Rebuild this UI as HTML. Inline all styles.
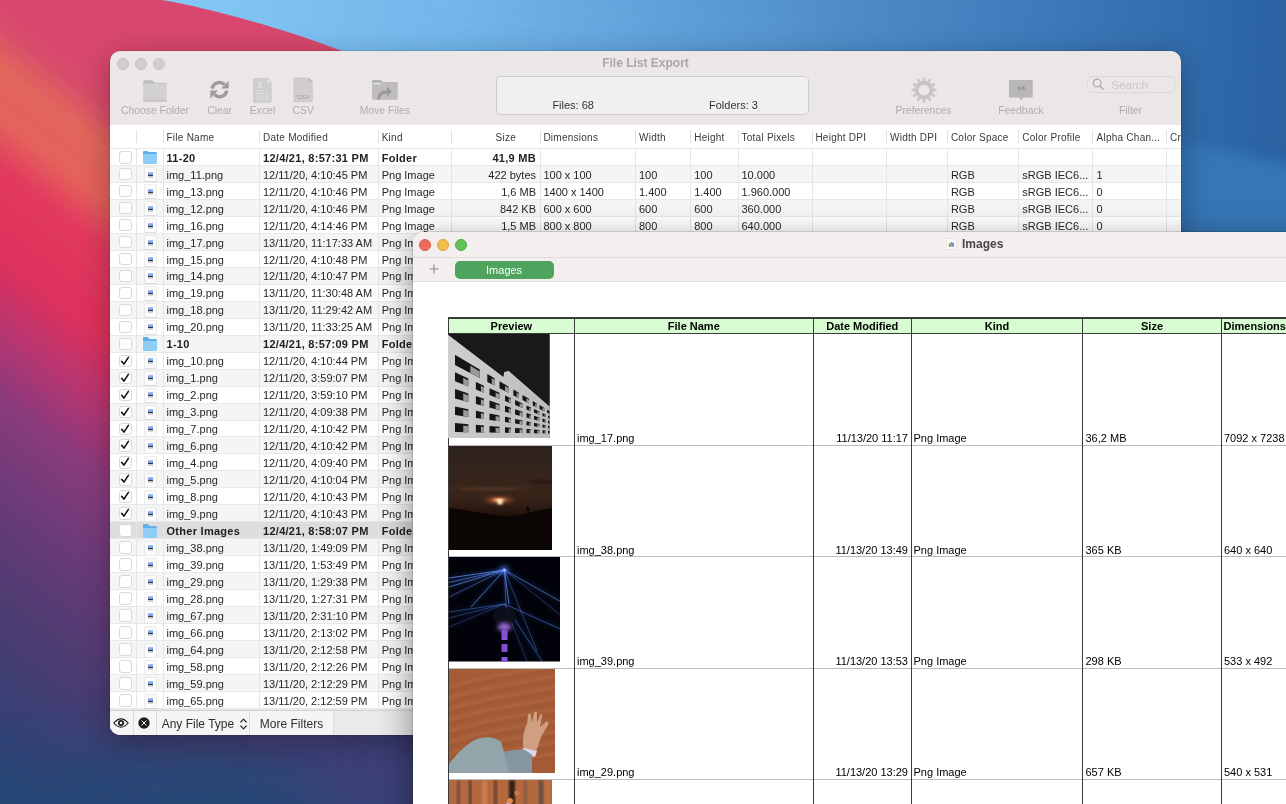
<!DOCTYPE html>
<html><head><meta charset="utf-8">
<style>
*{box-sizing:border-box;margin:0;padding:0}
html,body{width:1286px;height:804px;overflow:hidden;font-family:"Liberation Sans",sans-serif}
#main,#imgw{will-change:transform}
body{position:relative;background:#2f5d9a}
#wall{position:absolute;left:0;top:0;width:1286px;height:804px}
/* main window */
#main{position:absolute;left:110px;top:51px;width:1071px;height:684px;border-radius:10px;overflow:hidden;background:#ebe7e7;box-shadow:0 0 0 0.5px rgba(0,0,0,.2),0 8px 30px rgba(0,0,0,.3)}
#main .tl{position:absolute;top:6.5px;width:12px;height:12px;border-radius:50%;background:#d2cece;border:0.5px solid #c6c2c2}
#title{position:absolute;left:0;width:1071px;top:4.8px;text-align:center;font-weight:bold;font-size:12px;color:#aba7a7;line-height:normal}
.lbl{position:absolute;top:53.6px;font-size:10.4px;color:#b0acac;white-space:nowrap;transform:translateX(-50%);line-height:normal}
#status{position:absolute;left:386px;top:25px;width:313px;height:39px;border:1px solid #cfcccc;border-radius:4px;background:#f1f0f0}
#status span{position:absolute;top:21.9px;font-size:11px;color:#333;line-height:normal}
#thead{position:absolute;left:0;top:74px;width:1071px;height:23px;background:#fff}
.th{position:absolute;top:6.8px;letter-spacing:0.25px;font-size:10px;color:#3a3a3a;white-space:nowrap;line-height:normal}
.thd{position:absolute;top:5.4px;width:1px;height:13px;background:#e2e2e2}
#rows{position:absolute;left:0;top:97px;width:1071px}
.r{position:relative;height:16.97px;background:#fff;box-shadow:inset 0 1px 0 #e9e9e9;font-size:11px;color:#262626;white-space:nowrap}
.r.g{background:#f4f5f5}
.r.sel{background:#dddddd}
.r span{position:absolute;top:3.7px;line-height:normal}
.r.b{font-weight:bold;color:#1e1e1e;letter-spacing:0.28px}
.vl{position:absolute;top:97px;width:1px;height:560px;background:#e6e6e6}
.cb{position:absolute;left:9.2px;top:3px;width:12.5px;height:12.5px;border:1px solid #d9d9d9;border-radius:3px;background:#fff}
.ck{position:absolute;left:-1px;top:-1px}
.fo{position:absolute;left:33px;top:4.2px;width:14px;height:12px;border-radius:1.5px;background:#8dcdf6;border-top:2px solid #5eb0ea}
.fo:before{content:"";position:absolute;left:0;top:-3.5px;width:6px;height:3px;background:#5eb0ea;border-radius:1px 2px 0 0}
.fi{position:absolute;left:35px;top:3.5px;width:10.5px;height:13px;background:#fbfbfb;box-shadow:0 0 0 0.5px #dedede, 0 1px 1px rgba(0,0,0,.12)}
.fi:before{content:"";position:absolute;left:2.6px;top:3.2px;width:5.4px;height:3px;background:linear-gradient(#a9c4f4,#6f92e0)}
.fi:after{content:"";position:absolute;left:2.6px;top:6.2px;width:5.4px;height:3px;background:linear-gradient(#2a3450 0,#2a3450 40%,#c4c8ce 40%,#d8dadc 100%)}
#foot{position:absolute;left:0;top:659px;width:1071px;height:25px;background:#ece9e9;border-top:1px solid #d3d1d1}
#footw{position:absolute;left:0;top:0;width:223.4px;height:25px;background:#f6f5f5}
.fd{position:absolute;top:0;width:1px;height:25px;background:#dcdada}
#foot span{position:absolute;top:5.6px;font-size:12px;color:#2e2e2e;line-height:normal;white-space:nowrap}
/* images window */
#imgw{position:absolute;left:413px;top:232px;width:900px;height:600px;background:#fff;border-radius:9px 0 0 0;box-shadow:0 0 0 0.5px rgba(0,0,0,.25),0 10px 35px rgba(0,0,0,.45)}
#itb{position:absolute;left:0;top:0;width:900px;height:25.5px;background:#f4efef;border-bottom:1px solid #dfdbdb;border-radius:9px 0 0 0}
#itab{position:absolute;left:0;top:25.5px;width:900px;height:24.5px;background:#f4efef;border-bottom:1px solid #e3dfdf}
.itl{position:absolute;top:6.7px;width:12px;height:12px;border-radius:50%}
#ititle{position:absolute;left:549px;top:5.2px;font-size:12px;font-weight:bold;color:#4a4646;line-height:normal}
#grid{position:absolute;left:0;top:0;width:900px;height:600px}
/*table{border-collapse:collapse;table-layout:fixed;font-size:11px;color:#000}
th{background:#d7fcd1;border:1.4px solid #3a3a3a;height:15.5px;font-weight:bold;text-align:center;padding:0;line-height:13px}
td{border-left:1.4px solid #3a3a3a;border-right:1.4px solid #3a3a3a;border-bottom:1px solid #bdbdbd;height:111.5px;vertical-align:bottom;padding:0 0 0 2px;line-height:13px}
td.p{padding:0;vertical-align:top}
td.rt{text-align:right;padding:0 1px 0 0}*/
.gh{position:absolute;font-size:11px;font-weight:bold;color:#000;line-height:normal;white-space:nowrap}
.gt{position:absolute;font-size:11px;color:#000;line-height:normal;white-space:nowrap}
</style></head>
<body>
<svg id="wall" width="1286" height="804" viewBox="0 0 1286 804">
  <defs>
    <linearGradient id="gblue" gradientUnits="userSpaceOnUse" x1="180" y1="0" x2="1286" y2="60">
      <stop offset="0" stop-color="#84c8f5"/>
      <stop offset="0.25" stop-color="#72b6ea"/>
      <stop offset="0.55" stop-color="#5392cd"/>
      <stop offset="0.8" stop-color="#3b78b8"/>
      <stop offset="1" stop-color="#2a62a2"/>
    </linearGradient>
    <linearGradient id="gleft" gradientUnits="userSpaceOnUse" x1="0" y1="0" x2="-427" y2="553">
      <stop offset="0" stop-color="#d8466e"/>
      <stop offset="0.03" stop-color="#d84e6a"/>
      <stop offset="0.075" stop-color="#e2665c"/>
      <stop offset="0.135" stop-color="#e4625a"/>
      <stop offset="0.19" stop-color="#e23a5e"/>
      <stop offset="0.29" stop-color="#de305c"/>
      <stop offset="0.37" stop-color="#b83670"/>
      <stop offset="0.45" stop-color="#8a3a7c"/>
      <stop offset="0.56" stop-color="#6a3a78"/>
      <stop offset="0.68" stop-color="#4e3c72"/>
      <stop offset="0.79" stop-color="#3a4074"/>
      <stop offset="0.9" stop-color="#264676"/>
      <stop offset="1" stop-color="#234474"/>
    </linearGradient>
    <filter id="wb1" x="-50%" y="-50%" width="200%" height="200%"><feGaussianBlur stdDeviation="30"/></filter>
    <filter id="wb3" x="-20%" y="-20%" width="140%" height="140%"><feGaussianBlur stdDeviation="6"/></filter>
    <filter id="wb2"><feGaussianBlur stdDeviation="0.5"/></filter>
  </defs>
  <rect width="1286" height="804" fill="url(#gblue)"/>
  <path d="M1100,140 C1180,140 1240,150 1320,175 L1320,320 L1100,320 Z" fill="#3676b6" filter="url(#wb3)"/>
  <path d="M380,-5 C520,20 640,40 820,56" stroke="#8ccaf4" stroke-width="10" fill="none" opacity="0.25" filter="url(#wb1)"/>
  <g filter="url(#wb2)">
  <path d="M-50,-20 L90,-20 L162,0 C200,6 280,27 342,51 C420,85 560,180 640,320 L1300,804 L-50,804 Z" fill="url(#gleft)"/>
  </g>
  <ellipse cx="250" cy="870" rx="330" ry="130" fill="#284676" filter="url(#wb1)"/>
  <ellipse cx="430" cy="760" rx="140" ry="70" fill="#3e4078" filter="url(#wb1)"/>
</svg>


<div id="main">
  <div class="tl" style="left:6.5px"></div>
  <div class="tl" style="left:24.5px"></div>
  <div class="tl" style="left:42.5px"></div>
  <div id="title">File List Export</div>
  <div class="lbl" style="left:45px">Choose Folder</div>
<div class="lbl" style="left:109.6px">Clear</div>
<div class="lbl" style="left:152.5px">Excel</div>
<div class="lbl" style="left:193.3px">CSV</div>
<div class="lbl" style="left:274.8px">Move Files</div>
<div class="lbl" style="left:813.5px">Preferences</div>
<div class="lbl" style="left:911px">Feedback</div>
<div class="lbl" style="left:1020.5px">Filter</div>
<svg style="position:absolute;overflow:visible;left:33px;top:28.5px" width="24" height="22" viewBox="0 0 24 22"><path d="M0.2,2.3 Q0.2,0.3 2.2,0.3 L8.6,0.3 Q9.6,0.3 10.4,1.2 L11.8,2.8 L21.8,2.8 Q23.8,2.8 23.8,4.8 L23.8,7 L0.2,7 Z" fill="#bfbdbd"/><rect x="0.2" y="3.6" width="23.6" height="18.1" rx="2" fill="#d2d0d0"/><rect x="0.2" y="19.5" width="23.6" height="2.2" rx="1" fill="#c6c4c4"/></svg>
<svg style="position:absolute;overflow:visible;left:100px;top:29px" width="20" height="20" viewBox="0 0 20 20"><g fill="none" stroke="#9c9a9a" stroke-width="3.4" stroke-linecap="butt"><path d="M2.2,8.6 A7.4,7.4 0 0 1 14.6,4.6"/><path d="M16.8,10.6 A7.4,7.4 0 0 1 4.4,14.6"/></g><polygon points="18.6,1 18.6,8.6 11,8.6" fill="#9c9a9a"/><polygon points="0.4,18.4 0.4,10.6 8,10.6" fill="#9c9a9a"/></svg>
<svg style="position:absolute;overflow:visible;left:143.2px;top:26.5px" width="19" height="25" viewBox="0 0 19 25"><path d="M2,0 L14,0 L18.8,4.5 L18.8,23 Q18.8,25 16.8,25 L2,25 Q0,25 0,23 L0,2 Q0,0 2,0 Z" fill="#cfcdcd"/><path d="M14,0 L14,4.5 L18.8,4.5 Z" fill="#e6e4e4"/><path d="M14,0 L18.8,4.5 L14.5,1.5Z" fill="#b0aeae"/><text x="4.3" y="9.8" font-family="Liberation Serif" font-size="7.5" fill="#f0eeee">X</text><rect x="4" y="12.5" width="11" height="8.5" fill="none" stroke="#e0dede" stroke-width="0.8"/><line x1="4" y1="15.5" x2="15" y2="15.5" stroke="#e0dede" stroke-width="0.8"/><line x1="4" y1="18.2" x2="15" y2="18.2" stroke="#e0dede" stroke-width="0.8"/><line x1="9.5" y1="15.5" x2="9.5" y2="21" stroke="#e0dede" stroke-width="0.8"/></svg>
<svg style="position:absolute;overflow:visible;left:184.2px;top:27.1px" width="18.3" height="23.7" viewBox="0 0 18.3 23.7"><path d="M0,0 L14.8,0 L18.3,3.5 L18.3,23.7 L0,23.7 Z" fill="#d0cece" stroke="#c0bebe" stroke-width="0.6"/><path d="M14.8,0 L14.8,3.5 L18.3,3.5 Z" fill="#b6b4b4"/><text x="9.1" y="21.3" text-anchor="middle" font-family="Liberation Sans" font-size="6" fill="#9a9898">CSV</text></svg>
<svg style="position:absolute;overflow:visible;left:262.2px;top:29px" width="26" height="20" viewBox="0 0 26 20"><path d="M0,1.5 Q0,0 1.5,0 L8,0 Q9,0 9.6,0.8 L10.6,2 L24.3,2 Q25.7,2 25.7,3.5 L25.7,6 L0,6 Z" fill="#b3b1b1"/><rect x="0" y="2.2" width="25.7" height="17.6" rx="1.3" fill="#bebcbc"/><rect x="1.2" y="3" width="7.5" height="1.3" fill="#e8e6e6"/><path d="M5.5,19.8 C5.5,13 9.5,10.5 15,10.5 L15,6.5 L19.5,11.5 L15,16.8 L15,13.5 C11,13.5 8.5,15 7.8,19.8 Z" fill="#999797"/></svg>
<svg style="position:absolute;overflow:visible;left:800.55px;top:25.770000000000003px" width="26" height="26" viewBox="0 0 26 26"><path d="M10.57,3.92 L11.53,3.72 L11.68,0.47 L14.32,0.47 L14.47,3.72 L15.43,3.92 L16.37,4.22 L18.12,1.49 L20.41,2.81 L18.92,5.69 L19.65,6.35 L20.31,7.08 L23.19,5.59 L24.51,7.88 L21.78,9.63 L22.08,10.57 L22.28,11.53 L25.53,11.68 L25.53,14.32 L22.28,14.47 L22.08,15.43 L21.78,16.37 L24.51,18.12 L23.19,20.41 L20.31,18.92 L19.65,19.65 L18.92,20.31 L20.41,23.19 L18.12,24.51 L16.37,21.78 L15.43,22.08 L14.47,22.28 L14.32,25.53 L11.68,25.53 L11.53,22.28 L10.57,22.08 L9.63,21.78 L7.88,24.51 L5.59,23.19 L7.08,20.31 L6.35,19.65 L5.69,18.92 L2.81,20.41 L1.49,18.12 L4.22,16.37 L3.92,15.43 L3.72,14.47 L0.47,14.32 L0.47,11.68 L3.72,11.53 L3.92,10.57 L4.22,9.63 L1.49,7.88 L2.81,5.59 L5.69,7.08 L6.35,6.35 L7.08,5.69 L5.59,2.81 L7.88,1.49 L9.63,4.22 Z M18.3,13 A5.3,5.3 0 1 0 7.7,13 A5.3,5.3 0 1 0 18.3,13 Z" fill="#cac8c8" fill-rule="evenodd"/><circle cx="13" cy="13" r="7.2" fill="none" stroke="#bebcbc" stroke-width="0.8"/></svg>
<svg style="position:absolute;overflow:visible;left:899.3px;top:29.2px" width="24" height="21" viewBox="0 0 24 21"><rect x="0" y="0" width="23.7" height="17.5" fill="#b8b6b6"/><path d="M9.5,17.5 L14.7,17.5 L12.1,20.3 Z" fill="#b8b6b6"/><circle cx="10.2" cy="7.9" r="1.6" fill="#979595"/><path d="M11.7,8 Q11.7,10.9 9.2,12.1 Q10.5,10.6 10.3,9.3 Z" fill="#979595"/><circle cx="14.4" cy="7.9" r="1.6" fill="#979595"/><path d="M15.9,8 Q15.9,10.9 13.4,12.1 Q14.7,10.6 14.5,9.3 Z" fill="#979595"/></svg>
<div style="position:absolute;left:977.3px;top:24.6px;width:87.5px;height:17.8px;border:1px solid #dddada;border-radius:4px"></div>
<svg style="position:absolute;overflow:visible;left:982.1px;top:27.3px" width="12" height="12" viewBox="0 0 12 12"><circle cx="5.1" cy="5.1" r="3.9" fill="none" stroke="#a9a7a7" stroke-width="1.2"/><line x1="7.9" y1="7.9" x2="11.2" y2="11.2" stroke="#a9a7a7" stroke-width="1.3" stroke-linecap="round"/></svg>
<div style="position:absolute;left:1001.3px;top:26.6px;font-size:11.6px;color:#c9c6c6;line-height:normal">Search</div>
  <div id="status"><span style="left:55.4px">Files: 68</span><span style="left:212px">Folders: 3</span></div>
  <div id="thead">
    <span class="thd" style="left:26px"></span><span class="thd" style="left:53px"></span><span class="thd" style="left:149px"></span><span class="thd" style="left:268px"></span><span class="thd" style="left:341px"></span><span class="thd" style="left:430px"></span><span class="thd" style="left:525px"></span><span class="thd" style="left:580px"></span><span class="thd" style="left:628px"></span><span class="thd" style="left:702px"></span><span class="thd" style="left:776px"></span><span class="thd" style="left:837px"></span><span class="thd" style="left:908px"></span><span class="thd" style="left:982px"></span><span class="thd" style="left:1056px"></span>
    <span class="th" style="left:56.5px">File Name</span>
    <span class="th" style="left:153px">Date Modified</span>
    <span class="th" style="left:271.7px">Kind</span>
    <span class="th" style="left:385.6px">Size</span>
    <span class="th" style="left:433.4px">Dimensions</span>
    <span class="th" style="left:529px">Width</span>
    <span class="th" style="left:584.2px">Height</span>
    <span class="th" style="left:631.5px">Total Pixels</span>
    <span class="th" style="left:705.4px">Height DPI</span>
    <span class="th" style="left:780px">Width DPI</span>
    <span class="th" style="left:840.9px">Color Space</span>
    <span class="th" style="left:912.3px">Color Profile</span>
    <span class="th" style="left:986.5px">Alpha Chan...</span>
    <span class="th" style="left:1060px">Cr</span>
  </div>
  <div id="rows">
<div class="r b"><div class="cb"></div><i class="fo"></i><span style="left:56.5px">11-20</span><span style="left:153px">12/4/21, 8:57:31 PM</span><span style="left:271.7px">Folder</span><span class="rt" style="right:645px">41,9 MB</span></div>
<div class="r g"><div class="cb"></div><i class="fi"></i><span style="left:56.5px">img_11.png</span><span style="left:153px">12/11/20, 4:10:45 PM</span><span style="left:271.7px">Png Image</span><span class="rt" style="right:645px">422 bytes</span><span style="left:433.4px">100 x 100</span><span style="left:529px">100</span><span style="left:584.2px">100</span><span style="left:631.5px">10.000</span><span style="left:840.9px">RGB</span><span style="left:912.3px">sRGB IEC6...</span><span style="left:986.5px">1</span></div>
<div class="r"><div class="cb"></div><i class="fi"></i><span style="left:56.5px">img_13.png</span><span style="left:153px">12/11/20, 4:10:46 PM</span><span style="left:271.7px">Png Image</span><span class="rt" style="right:645px">1,6 MB</span><span style="left:433.4px">1400 x 1400</span><span style="left:529px">1.400</span><span style="left:584.2px">1.400</span><span style="left:631.5px">1.960.000</span><span style="left:840.9px">RGB</span><span style="left:912.3px">sRGB IEC6...</span><span style="left:986.5px">0</span></div>
<div class="r g"><div class="cb"></div><i class="fi"></i><span style="left:56.5px">img_12.png</span><span style="left:153px">12/11/20, 4:10:46 PM</span><span style="left:271.7px">Png Image</span><span class="rt" style="right:645px">842 KB</span><span style="left:433.4px">600 x 600</span><span style="left:529px">600</span><span style="left:584.2px">600</span><span style="left:631.5px">360.000</span><span style="left:840.9px">RGB</span><span style="left:912.3px">sRGB IEC6...</span><span style="left:986.5px">0</span></div>
<div class="r"><div class="cb"></div><i class="fi"></i><span style="left:56.5px">img_16.png</span><span style="left:153px">12/11/20, 4:14:46 PM</span><span style="left:271.7px">Png Image</span><span class="rt" style="right:645px">1,5 MB</span><span style="left:433.4px">800 x 800</span><span style="left:529px">800</span><span style="left:584.2px">800</span><span style="left:631.5px">640.000</span><span style="left:840.9px">RGB</span><span style="left:912.3px">sRGB IEC6...</span><span style="left:986.5px">0</span></div>
<div class="r g"><div class="cb"></div><i class="fi"></i><span style="left:56.5px">img_17.png</span><span style="left:153px">13/11/20, 11:17:33 AM</span><span style="left:271.7px">Png Image</span></div>
<div class="r"><div class="cb"></div><i class="fi"></i><span style="left:56.5px">img_15.png</span><span style="left:153px">12/11/20, 4:10:48 PM</span><span style="left:271.7px">Png Image</span></div>
<div class="r g"><div class="cb"></div><i class="fi"></i><span style="left:56.5px">img_14.png</span><span style="left:153px">12/11/20, 4:10:47 PM</span><span style="left:271.7px">Png Image</span></div>
<div class="r"><div class="cb"></div><i class="fi"></i><span style="left:56.5px">img_19.png</span><span style="left:153px">13/11/20, 11:30:48 AM</span><span style="left:271.7px">Png Image</span></div>
<div class="r g"><div class="cb"></div><i class="fi"></i><span style="left:56.5px">img_18.png</span><span style="left:153px">13/11/20, 11:29:42 AM</span><span style="left:271.7px">Png Image</span></div>
<div class="r"><div class="cb"></div><i class="fi"></i><span style="left:56.5px">img_20.png</span><span style="left:153px">13/11/20, 11:33:25 AM</span><span style="left:271.7px">Png Image</span></div>
<div class="r g b"><div class="cb"></div><i class="fo"></i><span style="left:56.5px">1-10</span><span style="left:153px">12/4/21, 8:57:09 PM</span><span style="left:271.7px">Folder</span></div>
<div class="r"><div class="cb"><svg class="ck" width="12" height="12" viewBox="0 0 12 12"><path d="M2.6 6.3 L4.9 9.1 L9.4 2.4" fill="none" stroke="#111" stroke-width="1.6" stroke-linecap="round" stroke-linejoin="round"/></svg></div><i class="fi"></i><span style="left:56.5px">img_10.png</span><span style="left:153px">12/11/20, 4:10:44 PM</span><span style="left:271.7px">Png Image</span></div>
<div class="r g"><div class="cb"><svg class="ck" width="12" height="12" viewBox="0 0 12 12"><path d="M2.6 6.3 L4.9 9.1 L9.4 2.4" fill="none" stroke="#111" stroke-width="1.6" stroke-linecap="round" stroke-linejoin="round"/></svg></div><i class="fi"></i><span style="left:56.5px">img_1.png</span><span style="left:153px">12/11/20, 3:59:07 PM</span><span style="left:271.7px">Png Image</span></div>
<div class="r"><div class="cb"><svg class="ck" width="12" height="12" viewBox="0 0 12 12"><path d="M2.6 6.3 L4.9 9.1 L9.4 2.4" fill="none" stroke="#111" stroke-width="1.6" stroke-linecap="round" stroke-linejoin="round"/></svg></div><i class="fi"></i><span style="left:56.5px">img_2.png</span><span style="left:153px">12/11/20, 3:59:10 PM</span><span style="left:271.7px">Png Image</span></div>
<div class="r g"><div class="cb"><svg class="ck" width="12" height="12" viewBox="0 0 12 12"><path d="M2.6 6.3 L4.9 9.1 L9.4 2.4" fill="none" stroke="#111" stroke-width="1.6" stroke-linecap="round" stroke-linejoin="round"/></svg></div><i class="fi"></i><span style="left:56.5px">img_3.png</span><span style="left:153px">12/11/20, 4:09:38 PM</span><span style="left:271.7px">Png Image</span></div>
<div class="r"><div class="cb"><svg class="ck" width="12" height="12" viewBox="0 0 12 12"><path d="M2.6 6.3 L4.9 9.1 L9.4 2.4" fill="none" stroke="#111" stroke-width="1.6" stroke-linecap="round" stroke-linejoin="round"/></svg></div><i class="fi"></i><span style="left:56.5px">img_7.png</span><span style="left:153px">12/11/20, 4:10:42 PM</span><span style="left:271.7px">Png Image</span></div>
<div class="r g"><div class="cb"><svg class="ck" width="12" height="12" viewBox="0 0 12 12"><path d="M2.6 6.3 L4.9 9.1 L9.4 2.4" fill="none" stroke="#111" stroke-width="1.6" stroke-linecap="round" stroke-linejoin="round"/></svg></div><i class="fi"></i><span style="left:56.5px">img_6.png</span><span style="left:153px">12/11/20, 4:10:42 PM</span><span style="left:271.7px">Png Image</span></div>
<div class="r"><div class="cb"><svg class="ck" width="12" height="12" viewBox="0 0 12 12"><path d="M2.6 6.3 L4.9 9.1 L9.4 2.4" fill="none" stroke="#111" stroke-width="1.6" stroke-linecap="round" stroke-linejoin="round"/></svg></div><i class="fi"></i><span style="left:56.5px">img_4.png</span><span style="left:153px">12/11/20, 4:09:40 PM</span><span style="left:271.7px">Png Image</span></div>
<div class="r g"><div class="cb"><svg class="ck" width="12" height="12" viewBox="0 0 12 12"><path d="M2.6 6.3 L4.9 9.1 L9.4 2.4" fill="none" stroke="#111" stroke-width="1.6" stroke-linecap="round" stroke-linejoin="round"/></svg></div><i class="fi"></i><span style="left:56.5px">img_5.png</span><span style="left:153px">12/11/20, 4:10:04 PM</span><span style="left:271.7px">Png Image</span></div>
<div class="r"><div class="cb"><svg class="ck" width="12" height="12" viewBox="0 0 12 12"><path d="M2.6 6.3 L4.9 9.1 L9.4 2.4" fill="none" stroke="#111" stroke-width="1.6" stroke-linecap="round" stroke-linejoin="round"/></svg></div><i class="fi"></i><span style="left:56.5px">img_8.png</span><span style="left:153px">12/11/20, 4:10:43 PM</span><span style="left:271.7px">Png Image</span></div>
<div class="r g"><div class="cb"><svg class="ck" width="12" height="12" viewBox="0 0 12 12"><path d="M2.6 6.3 L4.9 9.1 L9.4 2.4" fill="none" stroke="#111" stroke-width="1.6" stroke-linecap="round" stroke-linejoin="round"/></svg></div><i class="fi"></i><span style="left:56.5px">img_9.png</span><span style="left:153px">12/11/20, 4:10:43 PM</span><span style="left:271.7px">Png Image</span></div>
<div class="r sel b"><div class="cb"></div><i class="fo"></i><span style="left:56.5px">Other Images</span><span style="left:153px">12/4/21, 8:58:07 PM</span><span style="left:271.7px">Folder</span></div>
<div class="r g"><div class="cb"></div><i class="fi"></i><span style="left:56.5px">img_38.png</span><span style="left:153px">13/11/20, 1:49:09 PM</span><span style="left:271.7px">Png Image</span></div>
<div class="r"><div class="cb"></div><i class="fi"></i><span style="left:56.5px">img_39.png</span><span style="left:153px">13/11/20, 1:53:49 PM</span><span style="left:271.7px">Png Image</span></div>
<div class="r g"><div class="cb"></div><i class="fi"></i><span style="left:56.5px">img_29.png</span><span style="left:153px">13/11/20, 1:29:38 PM</span><span style="left:271.7px">Png Image</span></div>
<div class="r"><div class="cb"></div><i class="fi"></i><span style="left:56.5px">img_28.png</span><span style="left:153px">13/11/20, 1:27:31 PM</span><span style="left:271.7px">Png Image</span></div>
<div class="r g"><div class="cb"></div><i class="fi"></i><span style="left:56.5px">img_67.png</span><span style="left:153px">13/11/20, 2:31:10 PM</span><span style="left:271.7px">Png Image</span></div>
<div class="r"><div class="cb"></div><i class="fi"></i><span style="left:56.5px">img_66.png</span><span style="left:153px">13/11/20, 2:13:02 PM</span><span style="left:271.7px">Png Image</span></div>
<div class="r g"><div class="cb"></div><i class="fi"></i><span style="left:56.5px">img_64.png</span><span style="left:153px">13/11/20, 2:12:58 PM</span><span style="left:271.7px">Png Image</span></div>
<div class="r"><div class="cb"></div><i class="fi"></i><span style="left:56.5px">img_58.png</span><span style="left:153px">13/11/20, 2:12:26 PM</span><span style="left:271.7px">Png Image</span></div>
<div class="r g"><div class="cb"></div><i class="fi"></i><span style="left:56.5px">img_59.png</span><span style="left:153px">13/11/20, 2:12:29 PM</span><span style="left:271.7px">Png Image</span></div>
<div class="r"><div class="cb"></div><i class="fi"></i><span style="left:56.5px">img_65.png</span><span style="left:153px">13/11/20, 2:12:59 PM</span><span style="left:271.7px">Png Image</span></div>
  </div>
  <span class="vl" style="left:26px"></span><span class="vl" style="left:53px"></span><span class="vl" style="left:149px"></span><span class="vl" style="left:268px"></span><span class="vl" style="left:341px"></span><span class="vl" style="left:430px"></span><span class="vl" style="left:525px"></span><span class="vl" style="left:580px"></span><span class="vl" style="left:628px"></span><span class="vl" style="left:702px"></span><span class="vl" style="left:776px"></span><span class="vl" style="left:837px"></span><span class="vl" style="left:908px"></span><span class="vl" style="left:982px"></span><span class="vl" style="left:1056px"></span>
  <div id="foot">
    <div id="footw"></div>
    <div class="fd" style="left:22.6px"></div><div class="fd" style="left:46px"></div><div class="fd" style="left:139.3px"></div><div class="fd" style="left:223.4px"></div>
    <svg style="position:absolute;left:3.2px;top:6.2px" width="16" height="12" viewBox="0 0 16 12"><path d="M0.8,6 Q8,-2.2 15.2,6 Q8,14.2 0.8,6 Z" fill="none" stroke="#1a1a1a" stroke-width="1.1"/><circle cx="8" cy="6" r="2.2" fill="none" stroke="#1a1a1a" stroke-width="1.7"/></svg>
<svg style="position:absolute;left:28.3px;top:6.2px" width="12" height="12" viewBox="0 0 12 12"><circle cx="6" cy="6" r="5.7" fill="#1c1c1c"/><path d="M3.8,3.8 L8.2,8.2 M8.2,3.8 L3.8,8.2" stroke="#fff" stroke-width="1" stroke-linecap="round"/></svg>
<span style="left:51.7px">Any File Type</span>
<svg style="position:absolute;left:129.7px;top:6.5px" width="7" height="12" viewBox="0 0 7 12"><path d="M0.8,4 L3.5,1.2 L6.2,4 M0.8,8 L3.5,10.8 L6.2,8" fill="none" stroke="#2a2a2a" stroke-width="1.2" stroke-linecap="round" stroke-linejoin="round"/></svg>
<span style="left:149.8px">More Filters</span>
  </div>
</div>

<div id="imgw">
  <div id="itb">
    <div class="itl" style="left:6.2px;background:#ed6a5e;border:0.5px solid #d85a4e"></div>
    <div class="itl" style="left:24px;background:#f4bf4f;border:0.5px solid #dca43a"></div>
    <div class="itl" style="left:42px;background:#61c554;border:0.5px solid #50a840"></div>
        <div id="ititle">Images</div>
    <svg style="position:absolute;left:532.9px;top:6.4px" width="11" height="12" viewBox="0 0 11 12"><path d="M0.5,0.5 L8,0.5 L10.5,3 L10.5,11.5 L0.5,11.5 Z" fill="#fbfbfb" stroke="#dcdcdc" stroke-width="0.6"/><rect x="2.8" y="5.5" width="1.6" height="3.3" fill="#e8473a"/><rect x="4.5" y="4" width="1.6" height="4.8" fill="#5cb85c"/><rect x="6.2" y="4.8" width="1.6" height="4" fill="#4a78e0"/></svg>

  </div>
  <div id="itab">
        <svg style="position:absolute;left:15.9px;top:6.5px" width="10" height="10" viewBox="0 0 10 10"><path d="M5,0.5 L5,9.5 M0.5,5 L9.5,5" stroke="#8c8888" stroke-width="1.1"/></svg>
    <div style="position:absolute;left:41.6px;top:3.3px;width:99px;height:17.8px;border-radius:5px;background:#4ea45c;color:#fff;font-size:11px;text-align:center;line-height:18.6px">Images</div>

  </div>
  <div id="grid">
    <div style="position:absolute;left:35.4px;top:86px;width:900px;height:15.5px;background:#d7fcd1"></div>
<div style="position:absolute;left:34.699999999999996px;top:85.3px;width:900px;height:1.4px;background:#3a3a3a"></div>
<div style="position:absolute;left:34.699999999999996px;top:100.8px;width:900px;height:1.4px;background:#3a3a3a"></div>
<div style="position:absolute;left:35.4px;top:212.8px;width:900px;height:1px;background:#bcbcbc"></div>
<div style="position:absolute;left:35.4px;top:324.3px;width:900px;height:1px;background:#bcbcbc"></div>
<div style="position:absolute;left:35.4px;top:435.5px;width:900px;height:1px;background:#bcbcbc"></div>
<div style="position:absolute;left:35.4px;top:546.8px;width:900px;height:1px;background:#bcbcbc"></div>
<div style="position:absolute;left:34.699999999999996px;top:85.3px;width:1.4px;height:600px;background:#3a3a3a"></div>
<div style="position:absolute;left:160.70000000000002px;top:85.3px;width:1.4px;height:600px;background:#3a3a3a"></div>
<div style="position:absolute;left:399.5px;top:85.3px;width:1.4px;height:600px;background:#3a3a3a"></div>
<div style="position:absolute;left:497.7px;top:85.3px;width:1.4px;height:600px;background:#3a3a3a"></div>
<div style="position:absolute;left:669.0999999999999px;top:85.3px;width:1.4px;height:600px;background:#3a3a3a"></div>
<div style="position:absolute;left:807.5999999999999px;top:85.3px;width:1.4px;height:600px;background:#3a3a3a"></div>
<div class="gh" style="left:35.4px;width:126.0px;text-align:center;top:88.1px">Preview</div>
<div class="gh" style="left:161.4px;width:238.79999999999998px;text-align:center;top:88.1px">File Name</div>
<div class="gh" style="left:400.2px;width:98.19999999999999px;text-align:center;top:88.1px">Date Modified</div>
<div class="gh" style="left:498.4px;width:171.39999999999998px;text-align:center;top:88.1px">Kind</div>
<div class="gh" style="left:669.8px;width:138.5px;text-align:center;top:88.1px">Size</div>
<div class="gh" style="left:810.5999999999999px;top:88.1px">Dimensions</div>
<div class="gt" style="left:164.0px;top:200.27px">img_17.png</div>
<div class="gt" style="right:405.0px;top:200.27px">11/13/20 11:17</div>
<div class="gt" style="left:500.5px;top:200.27px">Png Image</div>
<div class="gt" style="left:672.5px;top:200.27px">36,2 MB</div>
<div class="gt" style="left:811.0px;top:200.27px">7092 x 7238</div>
<div class="gt" style="left:164.0px;top:311.77000000000004px">img_38.png</div>
<div class="gt" style="right:405.0px;top:311.77000000000004px">11/13/20 13:49</div>
<div class="gt" style="left:500.5px;top:311.77000000000004px">Png Image</div>
<div class="gt" style="left:672.5px;top:311.77000000000004px">365 KB</div>
<div class="gt" style="left:811.0px;top:311.77000000000004px">640 x 640</div>
<div class="gt" style="left:164.0px;top:422.97px">img_39.png</div>
<div class="gt" style="right:405.0px;top:422.97px">11/13/20 13:53</div>
<div class="gt" style="left:500.5px;top:422.97px">Png Image</div>
<div class="gt" style="left:672.5px;top:422.97px">298 KB</div>
<div class="gt" style="left:811.0px;top:422.97px">533 x 492</div>
<div class="gt" style="left:164.0px;top:534.27px">img_29.png</div>
<div class="gt" style="right:405.0px;top:534.27px">11/13/20 13:29</div>
<div class="gt" style="left:500.5px;top:534.27px">Png Image</div>
<div class="gt" style="left:672.5px;top:534.27px">657 KB</div>
<div class="gt" style="left:811.0px;top:534.27px">540 x 531</div>
<div style="position:absolute;left:35.4px;top:101.6px;width:101.5px;height:104px;overflow:hidden"><svg width="101.5" height="104" viewBox="0 0 101.5 104" style="display:block"><rect width="101.5" height="104" fill="#191919"/><defs><linearGradient id="fac" x1="0" y1="0" x2="1" y2="0.2"><stop offset="0" stop-color="#d0d0d0"/><stop offset="1" stop-color="#bdbdbd"/></linearGradient></defs><polygon points="0,0.5 55.3,42.7 56,38 60.7,36.7 101.5,72.3 101.5,104 0,104" fill="url(#fac)"/><polygon points="7.0,20.7 31.7,35.4 31.7,43.9 7.0,31.1" fill="#151515"/><polygon points="22.3,31.7 31.7,37.5 31.7,43.9 22.3,39.1" fill="#9a9a9a"/><polygon points="39.3,39.9 46.5,44.2 46.5,51.6 39.3,47.9" fill="#151515"/><polygon points="43.8,44.1 46.5,46.1 46.5,51.6 43.8,50.2" fill="#9a9a9a"/><polygon points="51.5,47.2 60.4,52.5 60.4,58.8 51.5,54.2" fill="#151515"/><polygon points="57.0,51.8 60.4,54.1 60.4,58.8 57.0,57.0" fill="#9a9a9a"/><polygon points="65.4,55.5 70.8,58.7 70.8,64.1 65.4,61.4" fill="#151515"/><polygon points="68.7,58.6 70.8,60.1 70.8,64.1 68.7,63.1" fill="#9a9a9a"/><polygon points="74.5,60.9 81.0,64.8 81.0,69.5 74.5,66.1" fill="#151515"/><polygon points="78.5,64.3 81.0,66.0 81.0,69.5 78.5,68.2" fill="#9a9a9a"/><polygon points="84.8,67.1 88.7,69.4 88.7,73.4 84.8,71.4" fill="#151515"/><polygon points="87.2,69.4 88.7,70.4 88.7,73.4 87.2,72.7" fill="#9a9a9a"/><polygon points="91.5,71.1 96.3,74.0 96.3,77.4 91.5,74.9" fill="#151515"/><polygon points="94.5,73.6 96.3,74.8 96.3,77.4 94.5,76.4" fill="#9a9a9a"/><polygon points="99.1,75.6 101.5,77.0 101.5,80.1 99.1,78.8" fill="#151515"/><polygon points="100.9,77.3 101.5,77.8 101.5,80.1 100.9,79.8" fill="#9a9a9a"/><polygon points="7.0,38.2 20.3,44.4 20.3,52.5 7.0,47.3" fill="#151515"/><polygon points="15.2,43.8 20.3,46.5 20.3,52.5 15.2,50.5" fill="#9a9a9a"/><polygon points="27.9,48.0 35.9,51.7 35.9,58.7 27.9,55.6" fill="#151515"/><polygon points="32.9,51.7 35.9,53.4 35.9,58.7 32.9,57.5" fill="#9a9a9a"/><polygon points="41.5,54.3 51.4,58.8 51.4,64.9 41.5,61.0" fill="#151515"/><polygon points="47.6,58.4 51.4,60.3 51.4,64.9 47.6,63.4" fill="#9a9a9a"/><polygon points="57.0,61.5 62.9,64.2 62.9,69.4 57.0,67.1" fill="#151515"/><polygon points="60.7,64.2 62.9,65.5 62.9,69.4 60.7,68.5" fill="#9a9a9a"/><polygon points="67.1,66.1 74.4,69.5 74.4,74.0 67.1,71.1" fill="#151515"/><polygon points="71.6,69.2 74.4,70.6 74.4,74.0 71.6,72.9" fill="#9a9a9a"/><polygon points="78.5,71.5 82.9,73.5 82.9,77.4 78.5,75.6" fill="#151515"/><polygon points="81.3,73.5 82.9,74.5 82.9,77.4 81.3,76.7" fill="#9a9a9a"/><polygon points="86.0,74.9 91.4,77.4 91.4,80.7 86.0,78.6" fill="#151515"/><polygon points="89.3,77.2 91.4,78.3 91.4,80.7 89.3,79.9" fill="#9a9a9a"/><polygon points="94.5,78.9 97.7,80.4 97.7,83.2 94.5,82.0" fill="#151515"/><polygon points="96.5,80.4 97.7,81.1 97.7,83.2 96.5,82.8" fill="#9a9a9a"/><polygon points="100.0,81.4 101.5,82.1 101.5,84.7 100.0,84.1" fill="#151515"/><polygon points="7.0,54.9 20.3,59.4 20.3,67.9 7.0,64.4" fill="#151515"/><polygon points="15.2,59.5 20.3,61.5 20.3,67.9 15.2,66.6" fill="#9a9a9a"/><polygon points="27.9,62.0 35.9,64.7 35.9,72.1 27.9,70.0" fill="#151515"/><polygon points="32.9,65.2 35.9,66.5 35.9,72.1 32.9,71.3" fill="#9a9a9a"/><polygon points="41.5,66.6 51.4,69.9 51.4,76.3 41.5,73.6" fill="#151515"/><polygon points="47.6,70.0 51.4,71.5 51.4,76.3 47.6,75.3" fill="#9a9a9a"/><polygon points="57.0,71.8 62.9,73.8 62.9,79.4 57.0,77.8" fill="#151515"/><polygon points="60.7,74.2 62.9,75.2 62.9,79.4 60.7,78.7" fill="#9a9a9a"/><polygon points="67.1,75.3 74.4,77.7 74.4,82.4 67.1,80.5" fill="#151515"/><polygon points="71.6,77.8 74.4,78.9 74.4,82.4 71.6,81.7" fill="#9a9a9a"/><polygon points="78.5,79.1 82.9,80.6 82.9,84.7 78.5,83.5" fill="#151515"/><polygon points="81.3,80.9 82.9,81.7 82.9,84.7 81.3,84.3" fill="#9a9a9a"/><polygon points="86.0,81.7 91.4,83.5 91.4,87.0 86.0,85.5" fill="#151515"/><polygon points="89.3,83.5 91.4,84.4 91.4,87.0 89.3,86.4" fill="#9a9a9a"/><polygon points="94.5,84.6 97.7,85.7 97.7,88.7 94.5,87.8" fill="#151515"/><polygon points="96.5,85.9 97.7,86.4 97.7,88.7 96.5,88.3" fill="#9a9a9a"/><polygon points="100.0,86.4 101.5,86.9 101.5,89.7 100.0,89.3" fill="#151515"/><polygon points="7.0,72.5 20.3,75.2 20.3,82.9 7.0,81.0" fill="#151515"/><polygon points="15.2,75.8 20.3,77.1 20.3,82.9 15.2,82.2" fill="#9a9a9a"/><polygon points="27.9,76.8 35.9,78.4 35.9,85.1 27.9,84.0" fill="#151515"/><polygon points="32.9,79.2 35.9,80.1 35.9,85.1 32.9,84.7" fill="#9a9a9a"/><polygon points="41.5,79.6 51.4,81.6 51.4,87.3 41.5,85.9" fill="#151515"/><polygon points="47.6,82.1 51.4,83.1 51.4,87.3 47.6,86.8" fill="#9a9a9a"/><polygon points="57.0,82.8 62.9,84.0 62.9,89.0 57.0,88.1" fill="#151515"/><polygon points="60.7,84.6 62.9,85.3 62.9,89.0 60.7,88.7" fill="#9a9a9a"/><polygon points="67.1,84.9 74.4,86.4 74.4,90.6 67.1,89.6" fill="#151515"/><polygon points="71.6,86.7 74.4,87.5 74.4,90.6 71.6,90.2" fill="#9a9a9a"/><polygon points="78.5,87.3 82.9,88.2 82.9,91.8 78.5,91.2" fill="#151515"/><polygon points="81.3,88.6 82.9,89.1 82.9,91.8 81.3,91.6" fill="#9a9a9a"/><polygon points="86.0,88.8 91.4,89.9 91.4,93.1 86.0,92.3" fill="#151515"/><polygon points="89.3,90.2 91.4,90.7 91.4,93.1 89.3,92.8" fill="#9a9a9a"/><polygon points="94.5,90.6 97.7,91.2 97.7,94.0 94.5,93.5" fill="#151515"/><polygon points="96.5,91.5 97.7,91.9 97.7,94.0 96.5,93.8" fill="#9a9a9a"/><polygon points="100.0,91.7 101.5,92.0 101.5,94.5 100.0,94.3" fill="#151515"/><polygon points="7.0,89.1 20.3,90.2 20.3,98.3 7.0,98.1" fill="#151515"/><polygon points="15.2,91.4 20.3,92.2 20.3,98.3 15.2,98.2" fill="#9a9a9a"/><polygon points="27.9,90.8 35.9,91.4 35.9,98.5 27.9,98.4" fill="#151515"/><polygon points="32.9,92.7 35.9,93.2 35.9,98.5 32.9,98.5" fill="#9a9a9a"/><polygon points="41.5,91.9 51.4,92.7 51.4,98.7 41.5,98.6" fill="#151515"/><polygon points="47.6,93.7 51.4,94.2 51.4,98.7 47.6,98.7" fill="#9a9a9a"/><polygon points="57.0,93.2 62.9,93.7 62.9,98.9 57.0,98.8" fill="#151515"/><polygon points="60.7,94.6 62.9,95.0 62.9,98.9 60.7,98.9" fill="#9a9a9a"/><polygon points="67.1,94.0 74.4,94.6 74.4,99.1 67.1,99.0" fill="#151515"/><polygon points="71.6,95.3 74.4,95.7 74.4,99.1 71.6,99.0" fill="#9a9a9a"/><polygon points="78.5,95.0 82.9,95.3 82.9,99.2 78.5,99.1" fill="#151515"/><polygon points="81.3,96.0 82.9,96.3 82.9,99.2 81.3,99.2" fill="#9a9a9a"/><polygon points="86.0,95.6 91.4,96.0 91.4,99.3 86.0,99.2" fill="#151515"/><polygon points="89.3,96.5 91.4,96.8 91.4,99.3 89.3,99.3" fill="#9a9a9a"/><polygon points="94.5,96.3 97.7,96.5 97.7,99.4 94.5,99.3" fill="#151515"/><polygon points="96.5,97.0 97.7,97.2 97.7,99.4 96.5,99.4" fill="#9a9a9a"/><polygon points="100.0,96.7 101.5,96.8 101.5,99.5 100.0,99.4" fill="#151515"/><polygon points="0,0 101.5,0 101.5,72.3 60.7,36.7 56,38 55.3,42.7 0,0.5" fill="#191919"/></svg></div>
<div style="position:absolute;left:35.7px;top:213.6px;width:103px;height:104px;overflow:hidden"><svg width="103" height="104" viewBox="0 0 103 104" style="display:block"><defs><linearGradient id="sky2" x1="0" y1="0" x2="0" y2="1"><stop offset="0" stop-color="#2c211c"/><stop offset="0.3" stop-color="#36251c"/><stop offset="0.5" stop-color="#3a2419"/><stop offset="0.65" stop-color="#24140e"/><stop offset="1" stop-color="#1a0d08"/></linearGradient><radialGradient id="glow2" cx="0.5" cy="0.5" r="0.5"><stop offset="0" stop-color="#ffe6b0"/><stop offset="0.15" stop-color="#f0a060"/><stop offset="0.45" stop-color="#8a4a28" stop-opacity="0.7"/><stop offset="1" stop-color="#3a2014" stop-opacity="0"/></radialGradient><filter id="bl2"><feGaussianBlur stdDeviation="1.2"/></filter></defs><rect width="103" height="104" fill="url(#sky2)"/><ellipse cx="40" cy="42" rx="45" ry="3" fill="#4a3022" opacity="0.35" filter="url(#bl2)"/><ellipse cx="92" cy="36" rx="12" ry="2" fill="#1e120c" opacity="0.6" filter="url(#bl2)"/><ellipse cx="40" cy="43" rx="30" ry="1.6" fill="#6a4028" opacity="0.5" filter="url(#bl2)"/><ellipse cx="50" cy="54" rx="20" ry="7" fill="url(#glow2)"/><circle cx="51" cy="56" r="2.6" fill="#fff2d0" filter="url(#bl2)"/><path d="M0,62 C20,64 40,69 55,70 C70,70 85,65 103,62 L103,104 L0,104 Z" fill="#0b0604"/><path d="M77,65 l2,-6 l2,6 z" fill="#0a0504"/></svg></div>
<div style="position:absolute;left:35.7px;top:325px;width:111.5px;height:104.5px;overflow:hidden"><svg width="111.5" height="104.5" viewBox="0 0 111.5 104.5" style="display:block"><defs><filter id="bl3" x="-20%" y="-20%" width="140%" height="140%"><feGaussianBlur stdDeviation="0.6"/></filter><filter id="bl3b" x="-50%" y="-50%" width="200%" height="200%"><feGaussianBlur stdDeviation="2.2"/></filter></defs><rect width="111.5" height="104.5" fill="#02030a"/><line x1="55.4" y1="13" x2="0" y2="21" stroke="#3f74f0" stroke-width="1.6" opacity="0.45" filter="url(#bl3b)"/><line x1="55.4" y1="13" x2="0" y2="21" stroke="#6a9cff" stroke-width="0.7" opacity="1.0"/><line x1="55.4" y1="13" x2="0" y2="25.5" stroke="#3f74f0" stroke-width="1.6" opacity="0.36000000000000004" filter="url(#bl3b)"/><line x1="55.4" y1="13" x2="0" y2="25.5" stroke="#6a9cff" stroke-width="0.7" opacity="0.8"/><line x1="55.4" y1="13" x2="0" y2="30" stroke="#3f74f0" stroke-width="1.6" opacity="0.405" filter="url(#bl3b)"/><line x1="55.4" y1="13" x2="0" y2="30" stroke="#6a9cff" stroke-width="0.7" opacity="0.9"/><line x1="55.4" y1="13" x2="0" y2="40" stroke="#3f74f0" stroke-width="1.6" opacity="0.27" filter="url(#bl3b)"/><line x1="55.4" y1="13" x2="0" y2="40" stroke="#6a9cff" stroke-width="0.7" opacity="0.6"/><line x1="55.4" y1="13" x2="22" y2="50" stroke="#3f74f0" stroke-width="1.6" opacity="0.405" filter="url(#bl3b)"/><line x1="55.4" y1="13" x2="22" y2="50" stroke="#6a9cff" stroke-width="0.7" opacity="0.9"/><line x1="55.4" y1="13" x2="111.5" y2="44.5" stroke="#3f74f0" stroke-width="1.6" opacity="0.36000000000000004" filter="url(#bl3b)"/><line x1="55.4" y1="13" x2="111.5" y2="44.5" stroke="#6a9cff" stroke-width="0.7" opacity="0.8"/><line x1="55.4" y1="13" x2="111.5" y2="58" stroke="#3f74f0" stroke-width="1.6" opacity="0.18000000000000002" filter="url(#bl3b)"/><line x1="55.4" y1="13" x2="111.5" y2="58" stroke="#6a9cff" stroke-width="0.7" opacity="0.4"/><line x1="55.4" y1="13" x2="88" y2="94" stroke="#3f74f0" stroke-width="1.6" opacity="0.225" filter="url(#bl3b)"/><line x1="55.4" y1="13" x2="88" y2="94" stroke="#6a9cff" stroke-width="0.7" opacity="0.5"/><line x1="55.4" y1="13" x2="60" y2="47" stroke="#3f74f0" stroke-width="1.6" opacity="0.45" filter="url(#bl3b)"/><line x1="55.4" y1="13" x2="60" y2="47" stroke="#6a9cff" stroke-width="0.7" opacity="1.0"/><line x1="55.4" y1="13" x2="57" y2="47" stroke="#3f74f0" stroke-width="1.6" opacity="0.27" filter="url(#bl3b)"/><line x1="55.4" y1="13" x2="57" y2="47" stroke="#6a9cff" stroke-width="0.7" opacity="0.6"/><line x1="55.4" y1="47" x2="0" y2="55" stroke="#3f74f0" stroke-width="1.6" opacity="0.27" filter="url(#bl3b)"/><line x1="55.4" y1="47" x2="0" y2="55" stroke="#5a8cf0" stroke-width="0.7" opacity="0.6"/><line x1="55.4" y1="47" x2="0" y2="61" stroke="#3f74f0" stroke-width="1.6" opacity="0.225" filter="url(#bl3b)"/><line x1="55.4" y1="47" x2="0" y2="61" stroke="#5a8cf0" stroke-width="0.7" opacity="0.5"/><line x1="55.4" y1="47" x2="0" y2="70" stroke="#3f74f0" stroke-width="1.6" opacity="0.18000000000000002" filter="url(#bl3b)"/><line x1="55.4" y1="47" x2="0" y2="70" stroke="#5a8cf0" stroke-width="0.7" opacity="0.4"/><line x1="55.4" y1="47" x2="111.5" y2="72" stroke="#3f74f0" stroke-width="1.6" opacity="0.315" filter="url(#bl3b)"/><line x1="55.4" y1="47" x2="111.5" y2="72" stroke="#5a8cf0" stroke-width="0.7" opacity="0.7"/><line x1="55.4" y1="47" x2="93" y2="104" stroke="#3f74f0" stroke-width="1.6" opacity="0.315" filter="url(#bl3b)"/><line x1="55.4" y1="47" x2="93" y2="104" stroke="#5a8cf0" stroke-width="0.7" opacity="0.7"/><line x1="55.4" y1="47" x2="78" y2="104" stroke="#3f74f0" stroke-width="1.6" opacity="0.18000000000000002" filter="url(#bl3b)"/><line x1="55.4" y1="47" x2="78" y2="104" stroke="#5a8cf0" stroke-width="0.7" opacity="0.4"/><circle cx="55.4" cy="13" r="1.6" fill="#e0ecff" filter="url(#bl3)"/><circle cx="55.4" cy="13" r="5" fill="#5a7cff" opacity="0.5" filter="url(#bl3b)"/><ellipse cx="55.4" cy="59" rx="12" ry="9" fill="#0e0e1c" opacity="0.9"/><ellipse cx="55.4" cy="70" rx="7" ry="4" fill="#b078f8" opacity="0.9" filter="url(#bl3b)"/><rect x="52.5" y="73" width="6" height="10" fill="#8a50d8" filter="url(#bl3)"/><rect x="52.5" y="87" width="6" height="8" fill="#8048d0" filter="url(#bl3)"/><rect x="52.5" y="100" width="6" height="5" fill="#8a58e0" filter="url(#bl3)"/></svg></div>
<div style="position:absolute;left:35.6px;top:436.6px;width:106px;height:104px;overflow:hidden"><svg width="106" height="104" viewBox="0 0 106 104" style="display:block"><defs><filter id="bl4"><feGaussianBlur stdDeviation="1.3"/></filter></defs><rect width="106" height="104" fill="#a45c38"/><path d="M-5,20 C25,10 60,4 110,-4" stroke="#b86e46" stroke-width="2.4" fill="none" opacity="0.55" filter="url(#bl4)"/><path d="M-5,24 C25,14 60,8 110,0" stroke="#8e4e30" stroke-width="1.6" fill="none" opacity="0.35" filter="url(#bl4)"/><path d="M-5,31 C25,21 60,15 110,7" stroke="#b86e46" stroke-width="2.4" fill="none" opacity="0.55" filter="url(#bl4)"/><path d="M-5,35 C25,25 60,19 110,11" stroke="#8e4e30" stroke-width="1.6" fill="none" opacity="0.35" filter="url(#bl4)"/><path d="M-5,42 C25,32 60,26 110,18" stroke="#b86e46" stroke-width="2.4" fill="none" opacity="0.55" filter="url(#bl4)"/><path d="M-5,46 C25,36 60,30 110,22" stroke="#8e4e30" stroke-width="1.6" fill="none" opacity="0.35" filter="url(#bl4)"/><path d="M-5,53 C25,43 60,37 110,29" stroke="#b86e46" stroke-width="2.4" fill="none" opacity="0.55" filter="url(#bl4)"/><path d="M-5,57 C25,47 60,41 110,33" stroke="#8e4e30" stroke-width="1.6" fill="none" opacity="0.35" filter="url(#bl4)"/><path d="M-5,64 C25,54 60,48 110,40" stroke="#b86e46" stroke-width="2.4" fill="none" opacity="0.55" filter="url(#bl4)"/><path d="M-5,68 C25,58 60,52 110,44" stroke="#8e4e30" stroke-width="1.6" fill="none" opacity="0.35" filter="url(#bl4)"/><path d="M-5,75 C25,65 60,59 110,51" stroke="#b86e46" stroke-width="2.4" fill="none" opacity="0.55" filter="url(#bl4)"/><path d="M-5,79 C25,69 60,63 110,55" stroke="#8e4e30" stroke-width="1.6" fill="none" opacity="0.35" filter="url(#bl4)"/><path d="M-5,86 C25,76 60,70 110,62" stroke="#b86e46" stroke-width="2.4" fill="none" opacity="0.55" filter="url(#bl4)"/><path d="M-5,90 C25,80 60,74 110,66" stroke="#8e4e30" stroke-width="1.6" fill="none" opacity="0.35" filter="url(#bl4)"/><path d="M-5,97 C25,87 60,81 110,73" stroke="#b86e46" stroke-width="2.4" fill="none" opacity="0.55" filter="url(#bl4)"/><path d="M-5,101 C25,91 60,85 110,77" stroke="#8e4e30" stroke-width="1.6" fill="none" opacity="0.35" filter="url(#bl4)"/><path d="M-5,108 C25,98 60,92 110,84" stroke="#b86e46" stroke-width="2.4" fill="none" opacity="0.55" filter="url(#bl4)"/><path d="M-5,112 C25,102 60,96 110,88" stroke="#8e4e30" stroke-width="1.6" fill="none" opacity="0.35" filter="url(#bl4)"/><path d="M75,82 C73,72 74,62 78,55 L79,46 C80,44 82,44 82,46 L83,54 L85,44 C86,42 88,42 88,44 L88,54 L91,46 C92,44 94,45 93,47 L91,58 L97,53 C99,52 100,54 99,56 L92,68 C90,74 88,80 86,86 Z" fill="#cf9f82"/><path d="M74,79 L88,82 L86,88 L73,85 Z" fill="#ddd6e6"/><path d="M0,95 C8,85 16,76 26,71 C34,67 46,67 52,73 L55,83 C62,82 70,80 76,81 L83,86 L83,104 L0,104 Z" fill="#93a5aa"/><path d="M55,83 C62,82 70,80 76,81 L83,86 L83,104 L60,104 Z" fill="#8596a0"/></svg></div>
<div style="position:absolute;left:35.6px;top:548px;width:103px;height:30px;overflow:hidden"><svg width="103" height="30" viewBox="0 0 103 30" style="display:block"><defs><filter id="bl5"><feGaussianBlur stdDeviation="1.5"/></filter></defs><rect width="103" height="30" fill="#b4683e"/><rect x="8" y="0" width="3" height="30" fill="#6a4a3a" filter="url(#bl5)"/><rect x="20" y="0" width="2.5" height="30" fill="#4a3a34" filter="url(#bl5)"/><rect x="33" y="0" width="5" height="30" fill="#c88050" filter="url(#bl5)"/><rect x="45" y="0" width="3" height="30" fill="#5a3a2c" filter="url(#bl5)"/><rect x="60" y="0" width="6" height="30" fill="#2a1a14" filter="url(#bl5)"/><rect x="75" y="0" width="3" height="30" fill="#7a5a4a" filter="url(#bl5)"/><rect x="90" y="0" width="4" height="30" fill="#5a4a44" filter="url(#bl5)"/><rect x="98" y="0" width="3" height="30" fill="#c07048" filter="url(#bl5)"/><circle cx="68" cy="13" r="2.5" fill="#d87a40"/><circle cx="61" cy="21" r="3" fill="#e08a50"/><circle cx="59" cy="26" r="3" fill="#b8b8d8"/></svg></div>
  </div>
</div>
</body></html>
